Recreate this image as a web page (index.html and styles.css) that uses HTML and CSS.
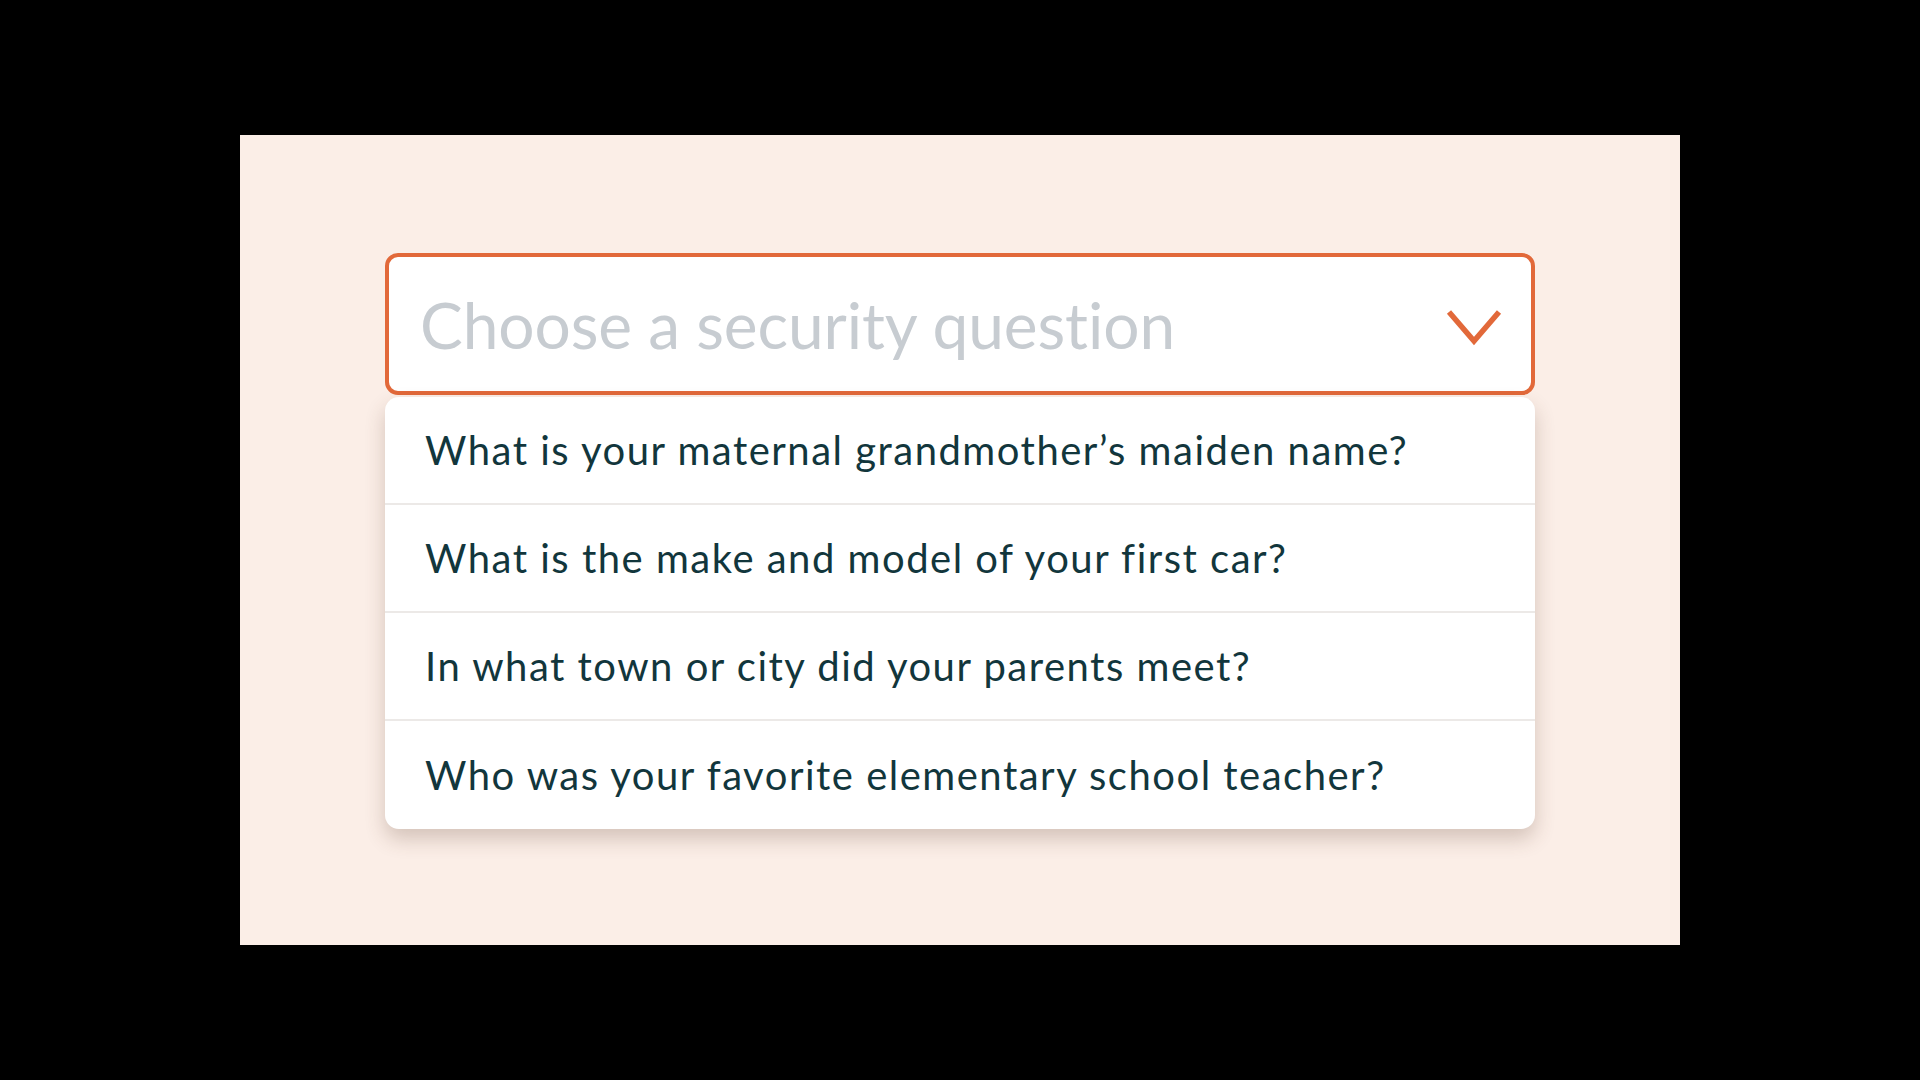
FILE: index.html
```html
<!DOCTYPE html>
<html lang="en">
<head>
<meta charset="utf-8">
<title>Security question</title>
<link rel="stylesheet" href="styles.css">
</head>
<body>
<div class="frame">
  <div class="panel">
    <div class="field">
      <div class="select">
        <span class="placeholder">Choose a security question</span>
        <svg class="chevron" width="56" height="40" viewBox="0 0 56 40" aria-hidden="true">
          <polyline points="3,4 28,33 53,4" fill="none" stroke="#E2693A" stroke-width="5.5" stroke-linejoin="miter"/>
        </svg>
      </div>
      <ul class="menu">
        <li class="option">What is your maternal grandmother’s maiden name?</li>
        <li class="option">What is the make and model of your first car?</li>
        <li class="option">In what town or city did your parents meet?</li>
        <li class="option">Who was your favorite elementary school teacher?</li>
      </ul>
    </div>
  </div>
</div>
</body>
</html>
```
FILE: styles.css
```css
html, body {
  margin: 0;
  padding: 0;
  background: #000;
}
.frame {
  width: 1920px;
  height: 1080px;
  padding: 135px 240px;
  box-sizing: border-box;
}
.panel {
  width: 1440px;
  height: 810px;
  background: #FBEEE7;
  padding: 118px 0 0 145px;
  box-sizing: border-box;
}
.field {
  width: 1150px;
  font-family: Lato, "Noto Sans", sans-serif;
}
.select {
  height: 142px;
  box-sizing: border-box;
  border: 4px solid #E2693A;
  border-radius: 13px;
  background: #fff;
  display: flex;
  align-items: center;
  justify-content: space-between;
  padding: 0 29px 0 31px;
}
.placeholder {
  font-size: 64px;
  color: #C7CCD1;
  letter-spacing: -0.1px;
}
.chevron {
  margin-top: 8px;
  display: block;
}
.menu {
  list-style: none;
  margin: 2px 0 0 0;
  padding: 0;
  background: #fff;
  border-radius: 14px;
  box-shadow: 0 10px 20px rgba(90, 60, 40, 0.24);
  overflow: hidden;
}
.option {
  height: 106px;
  display: flex;
  align-items: center;
  padding-left: 40px;
  font-size: 40px;
  letter-spacing: 1.5px;
  color: #12363C;
  border-top: 2px solid #ECE9E7;
}
.option:first-child {
  border-top: none;
}
.option:last-child {
  height: 108px;
}
```
